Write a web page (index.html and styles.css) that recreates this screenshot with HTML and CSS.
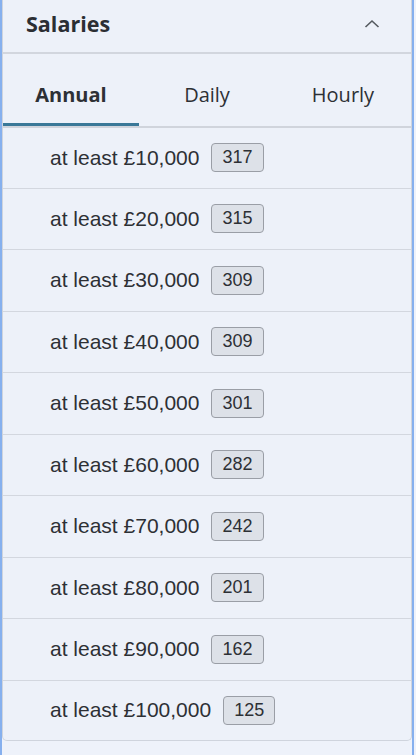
FILE: index.html
```html
<!DOCTYPE html>
<html lang="en">
<head>
<meta charset="utf-8">
<title>Salaries</title>
<link rel="stylesheet" href="styles.css">
</head>
<body>
<div class="frame">
  <section class="card">
    <header class="card-header">
      <h2 class="title">Salaries</h2>
      <svg class="chevron" width="16" height="10" viewBox="0 0 16 10" aria-hidden="true">
        <path d="M1.5 8 L8 2 L14.5 8" fill="none" stroke="#555a60" stroke-width="1.6"/>
      </svg>
    </header>
    <nav class="tabs">
      <div class="tab active">Annual</div>
      <div class="tab">Daily</div>
      <div class="tab">Hourly</div>
    </nav>
    <ul class="rows">
      <li class="row"><span class="label">at least £10,000</span><span class="badge">317</span></li>
      <li class="row"><span class="label">at least £20,000</span><span class="badge">315</span></li>
      <li class="row"><span class="label">at least £30,000</span><span class="badge">309</span></li>
      <li class="row"><span class="label">at least £40,000</span><span class="badge">309</span></li>
      <li class="row"><span class="label">at least £50,000</span><span class="badge">301</span></li>
      <li class="row"><span class="label">at least £60,000</span><span class="badge">282</span></li>
      <li class="row"><span class="label">at least £70,000</span><span class="badge">242</span></li>
      <li class="row"><span class="label">at least £80,000</span><span class="badge">201</span></li>
      <li class="row"><span class="label">at least £90,000</span><span class="badge">162</span></li>
      <li class="row"><span class="label">at least £100,000</span><span class="badge">125</span></li>
    </ul>
  </section>
</div>
</body>
</html>
```
FILE: styles.css
```css
html, body {
  margin: 0;
  padding: 0;
  background: #eef2fa;
}
body {
  width: 416px;
  height: 755px;
  overflow: hidden;
  color: #2d3035;
}
.frame {
  box-sizing: border-box;
  width: 414px;
  height: 755px;
  border-left: 2px solid #86b0ee;
  border-right: 2px solid #86b0ee;
}
.card {
  box-sizing: border-box;
  width: 410px;
  border: 1px solid #cfd4dd;
  border-top: none;
  border-radius: 0 0 5px 5px;
  background: #edf1f9;
}
.card-header {
  height: 54px;
  box-sizing: border-box;
  display: flex;
  align-items: center;
  justify-content: space-between;
  padding: 0 31px 4px 23px;
  border-bottom: 2px solid #d2d6de;
}
.title {
  margin: 0;
  font-family: "Open Sans", sans-serif;
  font-weight: 700;
  font-size: 21.5px;
  line-height: 28px;
  color: #2b2e33;
}
.chevron {
  display: block;
}
.tabs {
  display: grid;
  grid-template-columns: 1fr 1fr 1fr;
  border-bottom: 2px solid #d0d4dc;
}
.tab {
  box-sizing: border-box;
  height: 72px;
  padding-top: 29px;
  text-align: center;
  font-family: "Open Sans", sans-serif;
  font-size: 20px;
  line-height: 24px;
  color: #2d3035;
  border-bottom: 3px solid transparent;
}
.tab.active {
  font-weight: 700;
  border-bottom-color: #3a7898;
}
.rows {
  list-style: none;
  margin: 0;
  padding: 0;
}
.row {
  box-sizing: border-box;
  height: 61.5px;
  display: flex;
  align-items: center;
  padding-left: 47px;
  border-bottom: 1px solid #d3d7df;
  font-family: "Liberation Sans", Arial, sans-serif;
  font-size: 21px;
  color: #2d3035;
}
.row:first-child {
  height: 60.5px;
}
.row:last-child {
  border-bottom: none;
  height: 59.5px;
}
.badge {
  box-sizing: border-box;
  margin-left: 12px;
  height: 29px;
  padding: 0 10px;
  display: inline-flex;
  align-items: center;
  border: 1px solid #9a9ea6;
  border-radius: 4px;
  background: #dde1e8;
  font-size: 18px;
  color: #2d3035;
}
```
